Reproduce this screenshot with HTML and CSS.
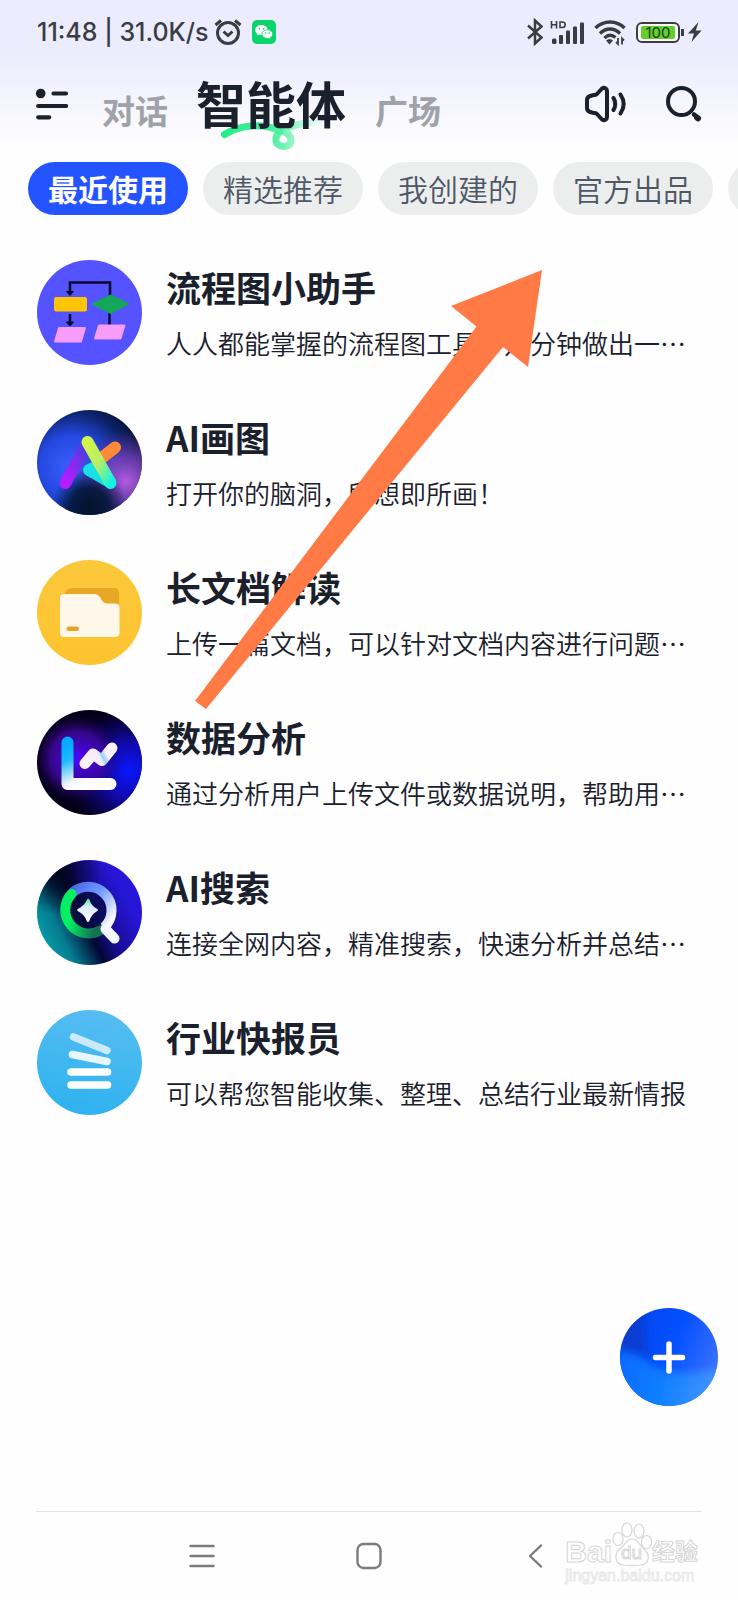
FILE: index.html
```html
<!DOCTYPE html>
<html lang="zh-CN">
<head>
<meta charset="utf-8">
<meta name="viewport" content="width=device-width, initial-scale=1">
<title>智能体</title>
<link rel="stylesheet" href="styles.css">
</head>
<body class="page">
<header class="top">
  <div class="status">
    <span class="status-text">11:48 | 31.0K/s</span>
    <svg class="alarm" width="28" height="28" viewBox="0 0 28 28" fill="none" stroke="#3b3c42" stroke-width="3"><circle cx="14" cy="15" r="10.5"/><path d="M1.500 7 7 2.500M26.500 7 21 2.500M9.500 13.500l4.500 4 4.500-4"/></svg>
    <svg class="wechat" width="24" height="24" viewBox="0 0 24 24"><rect width="24" height="24" rx="5" fill="#0bd46b"/><path d="M9.500 5C6 5 3.200 7.200 3.200 10c0 1.600.9 3 2.300 3.900L5 15.800l2.300-1.200c.7.200 1.400.3 2.200.3 3.500 0 6.300-2.200 6.300-4.900S13 5 9.500 5z" fill="#fff"/><path d="M15.300 9.800c-3 0-5.400 1.900-5.400 4.300s2.400 4.300 5.400 4.300c.6 0 1.200-.1 1.700-.2l2 1-.5-1.700c1.400-.8 2.200-2 2.200-3.400 0-2.400-2.400-4.300-5.400-4.300z" fill="#fff" stroke="#0bd46b" stroke-width=".8"/><g fill="#0bd46b"><circle cx="7.500" cy="8.800" r=".9"/><circle cx="11.600" cy="8.800" r=".9"/><circle cx="13.500" cy="13" r=".8"/><circle cx="17.200" cy="13" r=".8"/></g></svg>
    <div class="status-right">
      <svg width="18" height="28" viewBox="0 0 18 28" fill="none" stroke="#3b3c42" stroke-width="2.500" stroke-linejoin="miter"><path d="M2 7.500 15.500 19.500 9 25.500V2.500l6.500 6L2 20.500"/></svg>
      <svg class="signal" width="36" height="28" viewBox="0 0 36 28" fill="#3b3c42"><path d="M1.500 3v7.500M6.500 3v7.500M1.500 6.700h5M10 4h2.200c4 0 4 5.500 0 5.500H10z" fill="none" stroke="#3b3c42" stroke-width="1.600"/><rect x="2" y="20.500" width="4.500" height="5.500" rx="1.500"/><rect x="9" y="17" width="4" height="9" rx="1"/><rect x="16" y="12.500" width="4" height="13.500" rx="1"/><rect x="23" y="8.500" width="4" height="17.500" rx="1"/><rect x="30" y="4.500" width="4" height="21.500" rx="1"/></svg>
      <svg class="wifi" width="32" height="28" viewBox="0 0 32 28" fill="none" stroke="#3b3c42" stroke-width="3.400"><path d="M1.500 10c8-8 21-8 29 0M6 15.500c6-6 14-6 20 0M10.500 20c3.500-3.500 7.500-3.500 11-.5"/><path d="M12 22.500q4-3 7 0l-3.500 4z" fill="#3b3c42" stroke="none"/><path d="M24 20v6l-2-2M28 26.500v-6l2 2" stroke-width="1.800"/></svg>
      <span class="battery"><span class="battery-level">100</span></span>
      <svg class="bolt" width="14" height="22" viewBox="0 0 14 22" fill="#3b3c42"><path d="M10.500 1 0 12.500h6L3.500 21 13.500 9.500H7.800z"/></svg>
    </div>
  </div>
  <nav class="tabs">
    <button class="icon-btn" aria-label="菜单"><svg width="34" height="34" viewBox="0 0 34 34" fill="none" stroke="#1a202c" stroke-width="4.200" stroke-linecap="round"><circle cx="5.700" cy="6.500" r="4.800" fill="#1a202c" stroke="none"/><path d="M18.500 6.500h12.500M3.200 19h28M3.200 30.300h11"/></svg></button>
    <a class="tab tab-first" href="#chat">对话</a>
    <a class="tab tab-active" href="#agents" aria-current="page">
      <svg class="swoosh" width="112" height="34" viewBox="0 0 112 34" fill="none" stroke-width="7" stroke-linecap="round"><defs><linearGradient id="sw" gradientUnits="userSpaceOnUse" x1="0" y1="0" x2="100" y2="0"><stop offset="0" stop-color="#22ee84"/><stop offset=".5" stop-color="#44ee9c"/><stop offset="1" stop-color="#44ee9c" stop-opacity=".05"/></linearGradient></defs><path stroke="url(#sw)" d="M4.500 14.500C20 4.500 44 3 60 11"/><path stroke="url(#sw)" d="M100 1.500C80 3 55 8 56 20c0 8 14 9 15 1 0-7-5-8-10-11"/></svg>
      <span class="tab-label">智能体</span>
    </a>
    <a class="tab" href="#square">广场</a>
    <button class="icon-btn push" aria-label="声音"><svg width="42" height="38" viewBox="0 0 42 38" fill="none" stroke="#1a202c" stroke-width="4" stroke-linecap="round" stroke-linejoin="round"><path d="M18 3.500 12.500 9.500C8.500 10.500 3 10.500 3 15v8c0 4.500 5.500 4.500 9.500 5.500l5.500 6c2.500 1.500 5 0 5-2.500V6c0-2.500-2.500-4-5-2.500zM29.500 13c2.300 3.300 2.300 8.700 0 12M36.500 9.500c4 6 4 13 0 19"/></svg></button>
    <button class="icon-btn" aria-label="搜索"><svg width="36" height="36" viewBox="0 0 36 36" fill="none" stroke="#1a202c" stroke-linecap="round"><circle cx="15.500" cy="15.500" r="13.500" stroke-width="4"/><path d="m28 28.500 1 .8" stroke-width="4.500"/><path d="m31 31.500 1 .8" stroke-width="6"/></svg></button>
  </nav>
</header>
<div class="chips">
  <button class="chip chip-on">最近使用</button>
  <button class="chip">精选推荐</button>
  <button class="chip">我创建的</button>
  <button class="chip">官方出品</button>
  <button class="chip" aria-label="更多"></button>
</div>
<main class="list">
  <article class="item">
    <svg class="avatar" viewBox="0 0 105 105"><circle cx="52.500" cy="52.500" r="52.500" fill="#5552ff"/><g stroke="#070a2e" stroke-width="2.500" fill="none"><path d="M33 33V22.500h40V37M33 54v9M72.500 53v14"/></g><path d="m29.500 31.500 3.500 4 3.500-4zM29.500 62l3.500 4 3.500-4z" fill="#070a2e" stroke="#070a2e"/><rect x="17" y="37" width="33" height="14.500" rx="2" fill="#ffc406"/><path d="M73.500 35 92 44 73.500 53.500 55 44z" fill="#14a75a" stroke="#14a75a" stroke-linejoin="round"/><path d="M22 68h26l-4 13.500H18zM62 65.500h25.500l-4 13H58z" fill="#f79cf8" stroke="#f79cf8" stroke-width="2" stroke-linejoin="round"/></svg>
    <div class="body"><h2 class="name">流程图小助手</h2><p class="desc">人人都能掌握的流程图工具，几分钟做出一…</p></div>
  </article>
  <article class="item">
    <svg class="avatar" viewBox="0 0 105 105"><defs><radialGradient id="a1" cx=".33" cy=".55" r=".68"><stop offset="0" stop-color="#3a62ff"/><stop offset=".45" stop-color="#2448e0"/><stop offset=".8" stop-color="#0b2268"/><stop offset="1" stop-color="#061436"/></radialGradient><radialGradient id="a2" cx=".85" cy=".68" r=".5"><stop offset="0" stop-color="#b45be0"/><stop offset=".5" stop-color="#7a42bb" stop-opacity=".7"/><stop offset="1" stop-color="#5b2a92" stop-opacity="0"/></radialGradient><radialGradient id="a3" cx=".5" cy=".92" r=".36"><stop offset="0" stop-color="#021329"/><stop offset=".5" stop-color="#031737" stop-opacity=".9"/><stop offset="1" stop-color="#031737" stop-opacity="0"/></radialGradient><linearGradient id="a4" x1="0" y1="1" x2="1" y2="0"><stop offset="0" stop-color="#b91aff"/><stop offset="1" stop-color="#3f42dd"/></linearGradient><linearGradient id="a5" x1="0" y1="0" x2="1" y2="1"><stop offset="0" stop-color="#d2f64c"/><stop offset=".5" stop-color="#b9ee63"/><stop offset="1" stop-color="#13f3e3"/></linearGradient></defs><g><circle cx="52.500" cy="52.500" r="52.500" fill="url(#a1)"/><circle cx="52.500" cy="52.500" r="52.500" fill="url(#a2)"/><circle cx="52.500" cy="52.500" r="52.500" fill="url(#a3)"/></g><g fill="none" stroke-linecap="round" stroke-width="12"><path stroke="url(#a4)" d="M28.500 73 50 33"/><path stroke="#ff8a38" d="M62 50 78 37.500"/><path stroke="#18e0e6" fill="#18e0e6" stroke-linejoin="round" d="M73 72 52 60l8-4z"/><path stroke="url(#a5)" d="m50.500 32 23 41"/></g></svg>
    <div class="body"><h2 class="name">AI画图</h2><p class="desc">打开你的脑洞，所想即所画！</p></div>
  </article>
  <article class="item">
    <svg class="avatar" viewBox="0 0 105 105"><defs><linearGradient id="b1" x1="0" y1="0" x2="0" y2="1"><stop offset="0" stop-color="#fbc83b"/><stop offset="1" stop-color="#fdc42f"/></linearGradient></defs><circle cx="52.500" cy="52.500" r="52.500" fill="url(#b1)"/><path d="M28 34q1-6 7-6h42q5 0 5 5v16H50z" fill="#e7a824"/><path d="M23 38q0-4 4-4h31q3 0 4.500 2.500l2.500 4q2 3 5.500 3h7.500q4.500 0 4.500 4.500v25q0 4-4.500 4H27q-4 0-4-4z" fill="#fff7e9"/><rect x="29.500" y="66.500" width="12.500" height="4.500" rx="2.200" fill="#e7a42b"/></svg>
    <div class="body"><h2 class="name">长文档解读</h2><p class="desc">上传一篇文档，可以针对文档内容进行问题…</p></div>
  </article>
  <article class="item">
    <svg class="avatar" viewBox="0 0 105 105"><defs><radialGradient id="c1" cx=".88" cy=".58" r=".6"><stop offset="0" stop-color="#0817ff"/><stop offset=".45" stop-color="#140cd0" stop-opacity=".8"/><stop offset="1" stop-color="#12058d" stop-opacity="0"/></radialGradient><radialGradient id="c2" cx=".38" cy=".46" r=".42"><stop offset="0" stop-color="#4a08ff"/><stop offset=".6" stop-color="#4607ae" stop-opacity=".75"/><stop offset="1" stop-color="#200453" stop-opacity="0"/></radialGradient><linearGradient id="c3" x1="0" y1="0" x2=".5" y2="1"><stop offset="0" stop-color="#00a9ff"/><stop offset=".35" stop-color="#21baff"/><stop offset=".8" stop-color="#f2f7ff"/><stop offset="1" stop-color="#fff"/></linearGradient><linearGradient id="c4" x1="0" y1=".6" x2="1" y2=".3"><stop offset="0" stop-color="#fff0fa"/><stop offset=".5" stop-color="#f4eaff"/><stop offset=".62" stop-color="#8fd0ff"/><stop offset=".8" stop-color="#fff0ff"/></linearGradient></defs><circle cx="52.500" cy="52.500" r="52.500" fill="#030018"/><circle cx="52.500" cy="52.500" r="52.500" fill="url(#c1)"/><circle cx="52.500" cy="52.500" r="52.500" fill="url(#c2)"/><g fill="none" stroke-linecap="round" stroke-linejoin="round"><path d="M30.500 32.500v41.500h43" stroke="url(#c3)" stroke-width="12"/><path d="M48 53.500 56 44l9 6.500L75 38" stroke="url(#c4)" stroke-width="11"/></g></svg>
    <div class="body"><h2 class="name">数据分析</h2><p class="desc">通过分析用户上传文件或数据说明，帮助用…</p></div>
  </article>
  <article class="item">
    <svg class="avatar" viewBox="0 0 105 105"><defs><linearGradient id="d1" x1=".05" y1=".75" x2=".85" y2=".35"><stop offset="0" stop-color="#0599a7"/><stop offset=".2" stop-color="#057c90"/><stop offset=".48" stop-color="#020832"/><stop offset=".66" stop-color="#170c8e"/><stop offset="1" stop-color="#2616d8"/></linearGradient><radialGradient id="d2" cx=".2" cy=".12" r=".4"><stop offset="0" stop-color="#01051f"/><stop offset="1" stop-color="#01051f" stop-opacity="0"/></radialGradient><linearGradient id="d3" x1="0" y1="0" x2="1" y2=".8"><stop offset="0" stop-color="#4c68e5"/><stop offset=".5" stop-color="#6f9cff"/><stop offset="1" stop-color="#f7f7ff"/></linearGradient><linearGradient id="d4" x1="0" y1="0" x2="1" y2=".3"><stop offset=".3" stop-color="#04ef62"/><stop offset="1" stop-color="#147252"/></linearGradient><linearGradient id="d5" x1="0" y1="0" x2="0" y2="1"><stop offset="0" stop-color="#52f486"/><stop offset=".35" stop-color="#d9ebff"/><stop offset="1" stop-color="#fff"/></linearGradient></defs><circle cx="52.500" cy="52.500" r="52.500" fill="url(#d1)"/><circle cx="52.500" cy="52.500" r="52.500" fill="url(#d2)"/><circle cx="51" cy="50.500" r="22" fill="#060a3e" fill-opacity=".65"/><g fill="none" stroke-width="10"><path d="M35 33A23.500 23.500 0 0 1 67 67.500" stroke="url(#d3)"/><path d="M64 70A23.500 23.500 0 0 1 34.500 34" stroke="url(#d4)" stroke-linecap="round"/><path d="m68.500 69 9 9.500" stroke="#f6f8ff" stroke-linecap="round"/></g><path d="M50.500 39q1.500-1 2 1 2 6 7 8.500 3 1.500 0 3-5 3-7 9-1.500 3-3 0-2-6-8-9-3-1.500 0-3 6-3 9-9.500z" fill="url(#d5)"/></svg>
    <div class="body"><h2 class="name">AI搜索</h2><p class="desc">连接全网内容，精准搜索，快速分析并总结…</p></div>
  </article>
  <article class="item">
    <svg class="avatar" viewBox="0 0 105 105"><defs><linearGradient id="e1" x1=".6" y1="0" x2=".4" y2="1"><stop offset="0" stop-color="#56bdf0"/><stop offset="1" stop-color="#2eb2f0"/></linearGradient></defs><circle cx="52.500" cy="52.500" r="52.500" fill="url(#e1)"/><g stroke="#fff" stroke-width="7.500" stroke-linecap="round"><path d="m36.500 27 33.500 13.500" opacity=".7"/><path d="m35.500 44.500 34.500 7" opacity=".88"/><path d="M34 62h36.500M34 75h36.500"/></g></svg>
    <div class="body"><h2 class="name">行业快报员</h2><p class="desc">可以帮您智能收集、整理、总结行业最新情报</p></div>
  </article>
  <svg class="arrow" width="348" height="440" viewBox="0 0 348 440" aria-hidden="true"><path d="M347 0 256 36l25.500 20.500L0 431l11 8L308 77l25 20z" fill="#ff7a45"/></svg>
</main>
<footer class="dock">
  <button class="fab" aria-label="新建"><svg width="98" height="98" viewBox="0 0 98 98"><defs><linearGradient id="f1" x1="0" y1=".3" x2="1" y2=".7"><stop offset="0" stop-color="#0645ee"/><stop offset=".5" stop-color="#0450ff"/><stop offset="1" stop-color="#3f73ff"/></linearGradient><linearGradient id="f2" x1="0" y1=".4" x2="1" y2=".6"><stop offset="0" stop-color="#0667ff"/><stop offset=".4" stop-color="#0a7dff"/><stop offset="1" stop-color="#569cff"/></linearGradient><clipPath id="fc"><circle cx="49" cy="49" r="49"/></clipPath><filter id="fb" x="-20%" y="-20%" width="140%" height="140%"><feGaussianBlur stdDeviation="4"/></filter></defs><g clip-path="url(#fc)"><path d="M0 0h98v98H0z" fill="url(#f1)"/><path d="M-8-8h34q-4 28 2 56L-8 40z" fill="#073bc9" opacity=".8" filter="url(#fb)"/><path d="M-12 42Q14 42 30 56q18 10 40 9 20-1 40-6v60H-12z" fill="url(#f2)" filter="url(#fb)"/></g><path d="M49 36v27M35.500 49.500h27" stroke="#fff" stroke-width="5.500" stroke-linecap="round"/></svg></button>
  <nav class="sysnav">
    <button class="sys" aria-label="任务"><svg width="28" height="28" viewBox="0 0 28 28" fill="none" stroke="#7b7b7b" stroke-width="2.400" stroke-linecap="round"><path d="M2.500 4h23M2.500 14h23M2.500 24h23"/></svg></button>
    <button class="sys" aria-label="主屏幕"><svg width="28" height="28" viewBox="0 0 28 28" fill="none" stroke="#7b7b7b" stroke-width="2.400"><rect x="2.500" y="2" width="23" height="24" rx="6"/></svg></button>
    <button class="sys" aria-label="返回"><svg width="28" height="28" viewBox="0 0 28 28" fill="none" stroke="#7b7b7b" stroke-width="2.400" stroke-linecap="round" stroke-linejoin="round"><path d="M19 3.500 8 14l11 10.500"/></svg></button>
  </nav>
  <div class="mark">
    <div class="mark-row"><span class="mark-bai">Bai</span><span class="mark-paw"><svg width="40" height="44" viewBox="0 0 40 44" fill="#fff" stroke="#d6d6d6" stroke-width="1.200"><ellipse cx="6" cy="17" rx="5" ry="6.500"/><ellipse cx="15" cy="8" rx="5" ry="7"/><ellipse cx="27" cy="9" rx="5" ry="7"/><ellipse cx="34.500" cy="20" rx="5" ry="6.500"/><path d="M20 17c-6 0-7 6-11 9-8 6-6 16 2 17 6 .5 12 .5 18 0 8-1 10-10 3-16-5-4-6-10-12-10z"/></svg><span class="mark-du">du</span></span><span class="mark-cn">经验</span></div>
    <div class="mark-url">jingyan.baidu.com</div>
  </div>
</footer>
</body>
</html>
```
FILE: styles.css
```css
* {
  box-sizing: border-box;
}

.page {
  margin: 0;
  min-height: 100vh;
  display: flex;
  flex-direction: column;
  position: relative;
  overflow-x: hidden;
  background: #fefefe;
  color: #1a202c;
  font-family: "Noto Sans CJK SC", sans-serif;
}

button {
  border: 0;
  padding: 0;
  background: none;
  font: inherit;
  color: inherit;
}

svg {
  display: block;
  flex: none;
}

.top {
  background: linear-gradient(#ebecfd 0, #ebecfd 50px, #f1f1fe 80px, #fefefe 148px);
}

.status {
  height: 64px;
  padding: 0 36px 0 37px;
  display: flex;
  align-items: center;
}

.status-text {
  font: 500 25px/32px Inter, sans-serif;
  color: #3b3c42;
  white-space: nowrap;
}

.alarm {
  margin-left: 6px;
}

.wechat {
  margin-left: 10px;
}

.status-right {
  margin-left: auto;
  display: flex;
  align-items: center;
}

.signal {
  margin-left: 6px;
}

.wifi {
  margin-left: 8px;
}

.battery {
  position: relative;
  width: 44px;
  height: 21px;
  margin: 0 8px 0 10px;
  padding: 2px 3px;
  border: 2px solid #3b3c42;
  border-radius: 6px;
  background: #fff;
}

.battery::after {
  content: "";
  position: absolute;
  right: -6px;
  top: 5px;
  width: 3px;
  height: 7px;
  background: #3b3c42;
}

.battery-level {
  display: block;
  height: 13px;
  border-radius: 2px;
  background: #62cf2b;
  font: 400 15px/13px Inter, sans-serif;
  text-align: center;
  color: #26371e;
}

.tabs {
  height: 84px;
  padding: 0 36px 0 35px;
  display: flex;
  align-items: center;
}

.icon-btn {
  margin-bottom: 4px;
}

.tab {
  align-self: flex-end;
  padding-bottom: 14px;
  font-size: 33px;
  line-height: 48px;
  font-weight: 700;
  color: #a0a2a9;
  text-decoration: none;
}

.tab-first {
  margin-left: 33px;
}

.tab-active {
  position: relative;
  margin: 0 29px 0 28px;
  padding-bottom: 12px;
  font-size: 50px;
  line-height: 68px;
  color: #1a202c;
}

.tab-label {
  position: relative;
}

.swoosh {
  position: absolute;
  left: 24px;
  bottom: -6px;
}

.push {
  margin-left: auto;
  margin-right: 40px;
}

.chips {
  display: flex;
  gap: 15px;
  padding: 14px 0 0 28px;
  overflow: hidden;
}

.chip {
  flex: none;
  width: 160px;
  height: 53px;
  border-radius: 27px;
  background: #eceeee;
  color: #4e5765;
  font-size: 30px;
  line-height: 53px;
  font-weight: 350;
}

.chip-on {
  background: #2454ff;
  color: #fff;
  font-weight: 700;
}

.list {
  position: relative;
  flex: 1;
  display: flex;
  flex-direction: column;
  gap: 45px;
  padding: 45px 48px 0 37px;
}

.item {
  display: flex;
  gap: 24px;
}

.avatar {
  width: 105px;
  height: 105px;
}

.body {
  min-width: 0;
  flex: 1;
  padding-top: 3px;
}

.name {
  margin: 0;
  font-size: 35px;
  line-height: 48px;
  font-weight: 700;
}

.desc {
  margin: 12px 0 0;
  font-size: 26px;
  line-height: 40px;
  font-weight: 350;
  white-space: nowrap;
}

.arrow {
  position: absolute;
  left: 195px;
  top: 55px;
}

.dock {
  position: relative;
  padding: 0 36px;
}

.fab {
  position: absolute;
  right: 20px;
  bottom: 194px;
  border-radius: 50%;
}

.sysnav {
  height: 89px;
  border-top: 1px solid #e2e2e2;
  display: flex;
  justify-content: center;
  align-items: center;
  gap: 139px;
}

.mark {
  position: absolute;
  right: 40px;
  bottom: 14px;
  color: #fff;
  font-family: "Liberation Sans", "Noto Sans CJK SC", sans-serif;
  -webkit-text-stroke: 1px #d6d6d6;
}

.mark-row {
  display: flex;
  align-items: flex-end;
}

.mark-bai {
  font-size: 30px;
  line-height: 28px;
  font-weight: 700;
}

.mark-paw {
  position: relative;
}

.mark-du {
  position: absolute;
  left: 9px;
  bottom: 3px;
  font-size: 19px;
  line-height: 20px;
}

.mark-cn {
  font-size: 23px;
  line-height: 28px;
  font-weight: 700;
}

.mark-url {
  font-size: 16px;
  line-height: 20px;
  -webkit-text-stroke: 1px #e9e9e9;
}
```
